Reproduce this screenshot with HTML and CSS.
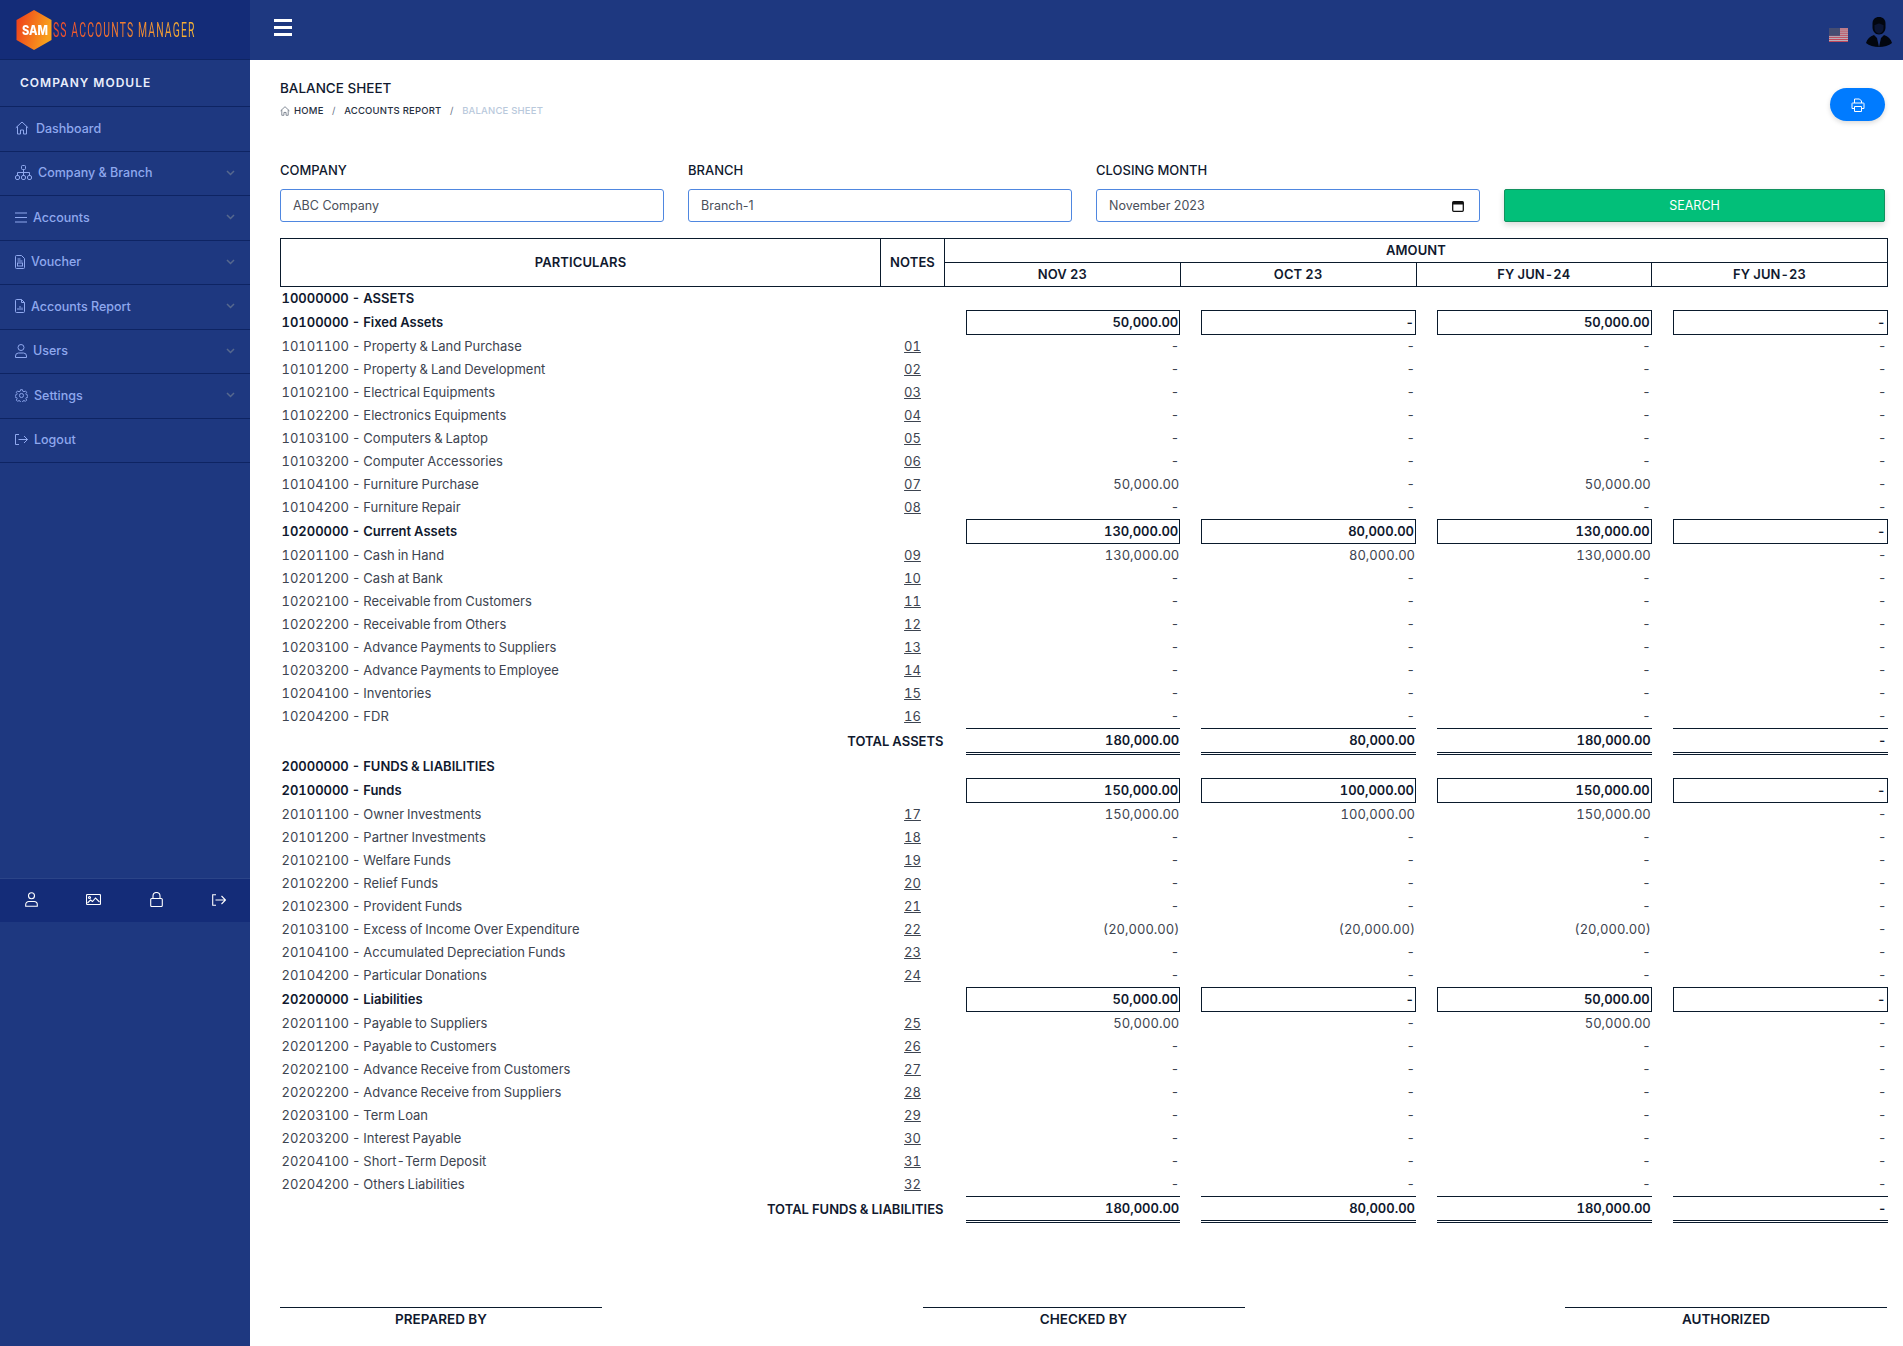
FILE: index.html
```html
<!DOCTYPE html>
<html>
  <head>
    <meta charset="utf-8" />
    <title>Balance Sheet</title>
    <link rel="stylesheet" href="styles.css" />
  </head>

  <body>
    <div class="app">
      <!-- Sidebar -->
      <aside class="sidebar">
        <div class="logo">
          <svg class="logo-hex" width="36" height="40" viewBox="0 0 36 40">
            <defs>
              <linearGradient id="hexfill" x1="0" y1="0" x2="1" y2="0.3">
                <stop offset="0" stop-color="#ee3a1c" />
                <stop offset="1" stop-color="#f8a01c" />
              </linearGradient>
            </defs>
            <path d="M18 0 L35.5 10 V30 L18 40 L0.5 30 V10 Z" fill="url(#hexfill)" />
          </svg>
          <span class="logo-sam">SAM</span>
          <span class="logo-text">SS ACCOUNTS MANAGER</span>
        </div>
        <div class="module-title">COMPANY MODULE</div>

        <nav class="menu">
          <a class="menu-item">
            <svg class="ico" width="14" height="14" viewBox="0 0 14 14"><path d="M0.8 6.8 7 1l6.2 5.8M2.5 5.5V13h3V9h3v4h3V5.5" /></svg>
            <span class="gap-7">Dashboard</span>
          </a>
          <a class="menu-item">
            <svg class="ico" width="17" height="15" viewBox="0 0 17 15"><rect x="6.5" y="0.5" width="4" height="4" rx="1" /><rect x="0.5" y="10.5" width="4" height="4" rx="1.5" /><rect x="6.5" y="10.5" width="4" height="4" rx="1.5" /><rect x="12.5" y="10.5" width="4" height="4" rx="1.5" /><path d="M8.5 4.5v6M2.5 10.5V7.500h12v3" /></svg>
            <span class="gap-6">Company &amp; Branch</span>
            <svg class="chev" width="9" height="6" viewBox="0 0 9 6"><path d="M1 1l3.5 3.5L8 1" /></svg>
          </a>
          <a class="menu-item">
            <svg class="ico" width="12" height="11" viewBox="0 0 12 11"><path d="M0 1h12M0 5.5h12M0 10h12" /></svg>
            <span class="gap-6">Accounts</span>
            <svg class="chev" width="9" height="6" viewBox="0 0 9 6"><path d="M1 1l3.5 3.5L8 1" /></svg>
          </a>
          <a class="menu-item">
            <svg class="ico" width="10" height="14" viewBox="0 0 10 14"><path d="M0.5 1.5a1 1 0 0 1 1-1h5l3 3v9a1 1 0 0 1-1 1h-7a1 1 0 0 1-1-1zM2.5 4h3M2.5 6h5" /><rect x="2.5" y="8" width="5" height="3" /></svg>
            <span class="gap-6">Voucher</span>
            <svg class="chev" width="9" height="6" viewBox="0 0 9 6"><path d="M1 1l3.5 3.5L8 1" /></svg>
          </a>
          <a class="menu-item">
            <svg class="ico" width="10" height="14" viewBox="0 0 10 14"><path d="M0.5 1.5a1 1 0 0 1 1-1h5l3 3v9a1 1 0 0 1-1 1h-7a1 1 0 0 1-1-1zM6.5 0.5v3h3M3 11V9M5 11V7M7 11V8.5" /></svg>
            <span class="gap-6">Accounts Report</span>
            <svg class="chev" width="9" height="6" viewBox="0 0 9 6"><path d="M1 1l3.5 3.5L8 1" /></svg>
          </a>
          <a class="menu-item">
            <svg class="ico" width="12" height="14" viewBox="0 0 12 14"><circle cx="6" cy="3.5" r="3" /><path d="M0.5 13.5v-1.500a3 3 0 0 1 3-3h5a3 3 0 0 1 3 3v1.500z" /></svg>
            <span class="gap-6">Users</span>
            <svg class="chev" width="9" height="6" viewBox="0 0 9 6"><path d="M1 1l3.5 3.5L8 1" /></svg>
          </a>
          <a class="menu-item">
            <svg class="ico" width="13" height="13" viewBox="0 0 14 14"><circle cx="7" cy="7" r="2.2" /><path d="M6 0.7h2l0.4 1.7 1.3 0.6 1.5-0.9 1.4 1.4-0.9 1.5 0.6 1.3 1.7 0.4v2l-1.7 0.4-0.6 1.3 0.9 1.5-1.4 1.4-1.5-0.9-1.3 0.6-0.4 1.7H6l-0.4-1.7-1.3-0.6-1.5 0.9-1.4-1.4 0.9-1.5-0.6-1.3-1.7-0.4v-2l1.7-0.4 0.6-1.3-0.9-1.5 1.4-1.4 1.5 0.9 1.3-0.6z" /></svg>
            <span class="gap-6">Settings</span>
            <svg class="chev" width="9" height="6" viewBox="0 0 9 6"><path d="M1 1l3.5 3.5L8 1" /></svg>
          </a>
          <a class="menu-item">
            <svg class="ico" width="13" height="11" viewBox="0 0 13 11"><path d="M4 0.5H0.5v10H4M3.5 5.500h9M9 2l3.5 3.5L9 9" /></svg>
            <span class="gap-6">Logout</span>
          </a>
        </nav>

        <div class="side-tools">
          <a><svg width="13" height="15" viewBox="0 0 13 15"><circle cx="6.5" cy="3.7" r="3" /><path d="M0.7 14.3v-1.6a3.2 3.2 0 0 1 3.2-3.2h5.2a3.2 3.2 0 0 1 3.2 3.2v1.6z" /></svg></a>
          <a><svg width="15" height="11" viewBox="0 0 15 11"><rect x="0.5" y="0.5" width="14" height="10" rx="1" /><circle cx="3.5" cy="3.5" r="1" /><path d="M1.5 9l3-3 2 1.5 3-3.5 4 4" /></svg></a>
          <a><svg width="13" height="15" viewBox="0 0 13 15"><rect x="0.7" y="6.5" width="11.6" height="8" rx="1" /><path d="M3 6.5V4a3.5 3.5 0 0 1 7 0v2.5" /></svg></a>
          <a><svg width="14" height="12" viewBox="0 0 14 12"><path d="M4 0.7H0.7v10.6H4M3.5 6h10M9.5 2l4 4-4 4" /></svg></a>
        </div>
      </aside>

      <div class="content">
        <!-- Top bar -->
        <header class="topbar">
          <div class="burger"><i></i><i></i><i></i></div>
          <div class="top-right">
            <svg class="flag" width="19" height="14" viewBox="0 0 19 14">
              <rect width="19" height="14" fill="#b8aeb8" />
              <path d="M0 1h19M0 3.100h19M0 5.200h19M0 7.300h19M0 9.400h19M0 11.500h19M0 13.500h19" stroke="#c0485c" stroke-width="1" />
              <rect width="11" height="7.800" fill="#454d72" />
            </svg>
            <svg class="avatar" width="26" height="30" viewBox="0 0 26 30">
              <path d="M13 0c4 0 6.500 2.500 6.500 6.500v4c0 3.500-2.500 7-6.500 7s-6.500-3.500-6.500-7v-4C6.500 2.500 9 0 13 0z" fill="#02060f" />
              <path d="M8 18l3 3 2 9 2-9 3-3c4 1.500 7 4 8 8-3 2.500-8 4-13 4S3 28.500 0 26c1-4 4-6.500 8-8z" fill="#02060f" />
              <path d="M8.500 8c1.500 0 3-1.500 4.500-1.500S16 8 17.500 8v3c0 3-2 5.500-4.500 5.500S8.500 14 8.500 11z" fill="#0b1534" />
            </svg>
          </div>
        </header>

        <main class="page">
          <div class="page-head">
            <div>
              <h1 class="page-title">BALANCE SHEET</h1>
              <div class="crumbs">
                <svg width="10" height="10" viewBox="0 0 14 14"><path d="M0.800 6.800 7 1l6.200 5.800M2.500 5.500V13h3V9h3v4h3V5.500" /></svg>
                <span class="crumb-home">HOME</span>
                <span class="crumb-sep">/</span>
                <span>ACCOUNTS REPORT</span>
                <span class="crumb-sep">/</span>
                <span class="crumb-now">BALANCE SHEET</span>
              </div>
            </div>
            <button class="print-btn">
              <svg width="14" height="14" viewBox="0 0 14 14"><path d="M3.500 5V1h5l2 2v2M3.500 10.500H1V5.500a0.500 0.500 0 0 1 0.500-0.500h11a0.500 0.500 0 0 1 0.500 0.500v5h-2.500M3.500 8.500h7v5h-7z" /></svg>
            </button>
          </div>

          <!-- Filters -->
          <div class="filters">
            <div class="field">
              <label>COMPANY</label>
              <div class="input">ABC Company</div>
            </div>
            <div class="field">
              <label>BRANCH</label>
              <div class="input">Branch-1</div>
            </div>
            <div class="field">
              <label>CLOSING MONTH</label>
              <div class="input input-date">
                November 2023
                <svg width="12" height="12" viewBox="0 0 12 12"><rect x="0.700" y="1.700" width="10.600" height="9.600" rx="1" fill="none" stroke="#111" stroke-width="1.300" /><rect x="0.700" y="1.700" width="10.600" height="2.800" fill="#111" /></svg>
              </div>
            </div>
            <button class="search-btn">SEARCH</button>
          </div>

          <table class="sheet">
            <colgroup>
              <col class="c-part" /><col class="c-note" /><col class="c-amt" /><col class="c-amt" /><col class="c-amt" /><col class="c-amt" />
            </colgroup>
            <thead>
              <tr>
                <th rowspan="2">PARTICULARS</th>
                <th rowspan="2">NOTES</th>
                <th colspan="4">AMOUNT</th>
              </tr>
              <tr><th>NOV 23</th><th>OCT 23</th><th>FY JUN-24</th><th>FY JUN-23</th></tr>
            </thead>
            <tbody>
              <tr class="head-row"><td colspan="6">10000000 - ASSETS</td></tr>
              <tr class="group"><td colspan="2">10100000 - Fixed Assets</td><td><div class="box">50,000.00</div></td><td><div class="box">-</div></td><td><div class="box">50,000.00</div></td><td><div class="box">-</div></td></tr>
              <tr><td>10101100 - Property &amp; Land Purchase</td><td><a>01</a></td><td>-</td><td>-</td><td>-</td><td>-</td></tr>
              <tr><td>10101200 - Property &amp; Land Development</td><td><a>02</a></td><td>-</td><td>-</td><td>-</td><td>-</td></tr>
              <tr><td>10102100 - Electrical Equipments</td><td><a>03</a></td><td>-</td><td>-</td><td>-</td><td>-</td></tr>
              <tr><td>10102200 - Electronics Equipments</td><td><a>04</a></td><td>-</td><td>-</td><td>-</td><td>-</td></tr>
              <tr><td>10103100 - Computers &amp; Laptop</td><td><a>05</a></td><td>-</td><td>-</td><td>-</td><td>-</td></tr>
              <tr><td>10103200 - Computer Accessories</td><td><a>06</a></td><td>-</td><td>-</td><td>-</td><td>-</td></tr>
              <tr><td>10104100 - Furniture Purchase</td><td><a>07</a></td><td>50,000.00</td><td>-</td><td>50,000.00</td><td>-</td></tr>
              <tr><td>10104200 - Furniture Repair</td><td><a>08</a></td><td>-</td><td>-</td><td>-</td><td>-</td></tr>
              <tr class="group"><td colspan="2">10200000 - Current Assets</td><td><div class="box">130,000.00</div></td><td><div class="box">80,000.00</div></td><td><div class="box">130,000.00</div></td><td><div class="box">-</div></td></tr>
              <tr><td>10201100 - Cash in Hand</td><td><a>09</a></td><td>130,000.00</td><td>80,000.00</td><td>130,000.00</td><td>-</td></tr>
              <tr><td>10201200 - Cash at Bank</td><td><a>10</a></td><td>-</td><td>-</td><td>-</td><td>-</td></tr>
              <tr><td>10202100 - Receivable from Customers</td><td><a>11</a></td><td>-</td><td>-</td><td>-</td><td>-</td></tr>
              <tr><td>10202200 - Receivable from Others</td><td><a>12</a></td><td>-</td><td>-</td><td>-</td><td>-</td></tr>
              <tr><td>10203100 - Advance Payments to Suppliers</td><td><a>13</a></td><td>-</td><td>-</td><td>-</td><td>-</td></tr>
              <tr><td>10203200 - Advance Payments to Employee</td><td><a>14</a></td><td>-</td><td>-</td><td>-</td><td>-</td></tr>
              <tr><td>10204100 - Inventories</td><td><a>15</a></td><td>-</td><td>-</td><td>-</td><td>-</td></tr>
              <tr><td>10204200 - FDR</td><td><a>16</a></td><td>-</td><td>-</td><td>-</td><td>-</td></tr>
              <tr class="total"><td colspan="2">TOTAL ASSETS</td><td><div class="sum">180,000.00</div></td><td><div class="sum">80,000.00</div></td><td><div class="sum">180,000.00</div></td><td><div class="sum">-</div></td></tr>
              <tr class="head-row"><td colspan="6">20000000 - FUNDS &amp; LIABILITIES</td></tr>
              <tr class="group"><td colspan="2">20100000 - Funds</td><td><div class="box">150,000.00</div></td><td><div class="box">100,000.00</div></td><td><div class="box">150,000.00</div></td><td><div class="box">-</div></td></tr>
              <tr><td>20101100 - Owner Investments</td><td><a>17</a></td><td>150,000.00</td><td>100,000.00</td><td>150,000.00</td><td>-</td></tr>
              <tr><td>20101200 - Partner Investments</td><td><a>18</a></td><td>-</td><td>-</td><td>-</td><td>-</td></tr>
              <tr><td>20102100 - Welfare Funds</td><td><a>19</a></td><td>-</td><td>-</td><td>-</td><td>-</td></tr>
              <tr><td>20102200 - Relief Funds</td><td><a>20</a></td><td>-</td><td>-</td><td>-</td><td>-</td></tr>
              <tr><td>20102300 - Provident Funds</td><td><a>21</a></td><td>-</td><td>-</td><td>-</td><td>-</td></tr>
              <tr><td>20103100 - Excess of Income Over Expenditure</td><td><a>22</a></td><td>(20,000.00)</td><td>(20,000.00)</td><td>(20,000.00)</td><td>-</td></tr>
              <tr><td>20104100 - Accumulated Depreciation Funds</td><td><a>23</a></td><td>-</td><td>-</td><td>-</td><td>-</td></tr>
              <tr><td>20104200 - Particular Donations</td><td><a>24</a></td><td>-</td><td>-</td><td>-</td><td>-</td></tr>
              <tr class="group"><td colspan="2">20200000 - Liabilities</td><td><div class="box">50,000.00</div></td><td><div class="box">-</div></td><td><div class="box">50,000.00</div></td><td><div class="box">-</div></td></tr>
              <tr><td>20201100 - Payable to Suppliers</td><td><a>25</a></td><td>50,000.00</td><td>-</td><td>50,000.00</td><td>-</td></tr>
              <tr><td>20201200 - Payable to Customers</td><td><a>26</a></td><td>-</td><td>-</td><td>-</td><td>-</td></tr>
              <tr><td>20202100 - Advance Receive from Customers</td><td><a>27</a></td><td>-</td><td>-</td><td>-</td><td>-</td></tr>
              <tr><td>20202200 - Advance Receive from Suppliers</td><td><a>28</a></td><td>-</td><td>-</td><td>-</td><td>-</td></tr>
              <tr><td>20203100 - Term Loan</td><td><a>29</a></td><td>-</td><td>-</td><td>-</td><td>-</td></tr>
              <tr><td>20203200 - Interest Payable</td><td><a>30</a></td><td>-</td><td>-</td><td>-</td><td>-</td></tr>
              <tr><td>20204100 - Short-Term Deposit</td><td><a>31</a></td><td>-</td><td>-</td><td>-</td><td>-</td></tr>
              <tr><td>20204200 - Others Liabilities</td><td><a>32</a></td><td>-</td><td>-</td><td>-</td><td>-</td></tr>
              <tr class="total"><td colspan="2">TOTAL FUNDS &amp; LIABILITIES</td><td><div class="sum">180,000.00</div></td><td><div class="sum">80,000.00</div></td><td><div class="sum">180,000.00</div></td><td><div class="sum">-</div></td></tr>
            </tbody>
          </table>

          <!-- Signatures -->
          <div class="signs">
            <div class="sign">PREPARED BY</div>
            <div class="sign">CHECKED BY</div>
            <div class="sign">AUTHORIZED</div>
          </div>
        </main>
      </div>
    </div>
  </body>
</html>
```

FILE: styles.css
```css
html {
  height: 100%;
}
body {
  margin: 0;
  font-family: "Inter", "Roboto", sans-serif;
  font-size: 13px;
  color: #3d4450;
  background: #ffffff;
}
.app {
  display: flex;
  min-height: 1346px;
}

/* sidebar */
.sidebar {
  width: 250px;
  flex: none;
  background: #1e3880;
  display: flex;
  flex-direction: column;
}
.logo {
  height: 59px;
  background: #142c78;
  border-bottom: 1px solid #0e2463;
  display: flex;
  align-items: center;
  padding-left: 16px;
  position: relative;
  overflow: hidden;
}
.logo-hex {
  flex: none;
}
.logo-sam {
  position: absolute;
  left: 22px;
  top: 22px;
  font-size: 13px;
  line-height: 16px;
  font-weight: 800;
  color: #ffffff;
  transform: scaleX(0.85);
  transform-origin: left;
}
.logo-text {
  margin-left: 1px;
  font-family: "Roboto", sans-serif;
  font-size: 20px;
  font-weight: 400;
  letter-spacing: 2.2px;
  white-space: nowrap;
  transform: scaleX(0.52);
  transform-origin: left;
  background: linear-gradient(90deg, #f04a2c, #f6b634);
  -webkit-background-clip: text;
  background-clip: text;
  color: transparent;
}
.module-title {
  height: 47px;
  line-height: 46px;
  padding-left: 20px;
  font-size: 12px;
  font-weight: 600;
  letter-spacing: 1px;
  color: #e9eefc;
  border-bottom: 1px solid #0e2463;
  box-sizing: border-box;
}
.menu {
  height: 771px;
}
.menu-item {
  display: flex;
  align-items: center;
  height: 44.5px;
  box-sizing: border-box;
  padding: 0 15px 1px;
  border-bottom: 1px solid #0e2463;
  color: #8fa8ee;
  font-size: 12.5px;
  font-weight: 500;
}
.ico {
  flex: none;
  fill: none;
  stroke: #8fa8ee;
  stroke-width: 1;
}
.gap-7 {
  margin-left: 7px;
}
.gap-6 {
  margin-left: 6px;
}
.chev {
  margin-left: auto;
  margin-right: 0;
  fill: none;
  stroke: #56688e;
  stroke-width: 1.5;
}
.side-tools {
  display: flex;
  height: 44px;
  padding-bottom: 2px;
  background: #142c78;
  border-top: 1px solid #2b4488;
  box-sizing: border-box;
}
.side-tools a {
  flex: 1;
  display: flex;
  align-items: center;
  justify-content: center;
}
.side-tools svg {
  fill: none;
  stroke: #ffffff;
  stroke-width: 1.1;
}

/* top bar */
.content {
  flex: 1;
  min-width: 0;
}
.topbar {
  height: 60px;
  background: #1e3880;
  display: flex;
  align-items: center;
  justify-content: space-between;
  padding: 0 11px 0 24px;
  box-sizing: border-box;
}
.burger {
  width: 18px;
  margin-top: -2px;
}
.burger i {
  display: block;
  height: 3px;
  background: #ffffff;
  margin-bottom: 4px;
}
.top-right {
  display: flex;
  align-items: center;
  gap: 18px;
}
.flag {
  margin-top: 9px;
}
.avatar {
  margin-top: 4px;
}

/* page */
.page {
  padding: 20px 16px 0 30px;
}
.page-head {
  display: flex;
  justify-content: space-between;
  align-items: flex-start;
  padding-right: 2px;
  height: 82px;
}
.page-title {
  margin: 0;
  font-size: 13.5px;
  line-height: 16px;
  font-weight: 500;
  color: #10192e;
}
.crumbs {
  display: flex;
  align-items: center;
  margin-top: 8px;
  font-size: 9.5px;
  line-height: 14px;
  font-weight: 500;
  color: #27303f;
  letter-spacing: 0.2px;
}
.crumbs svg {
  fill: none;
  stroke: #556070;
  stroke-width: 1;
}
.crumb-home {
  margin-left: 4px;
}
.crumb-sep {
  margin: 0 8.5px;
  color: #667085;
  font-weight: 400;
}
.crumb-now {
  color: #b9c9dc;
}
.print-btn {
  width: 55px;
  height: 33px;
  margin-top: 8px;
  border: 0;
  border-radius: 17px;
  background: #007bff;
  box-shadow: 0 2px 5px rgba(0, 0, 0, 0.15);
  display: flex;
  align-items: center;
  justify-content: center;
  padding: 0;
}
.print-btn svg {
  fill: none;
  stroke: #ffffff;
  stroke-width: 1;
}

.filters {
  display: grid;
  grid-template-columns: 384px 384px 384px 1fr;
  column-gap: 24px;
  align-items: end;
  padding-right: 2px;
}
.field label {
  display: block;
  font-size: 13px;
  line-height: 16px;
  font-weight: 500;
  color: #10192e;
  margin-bottom: 11px;
}
.input {
  height: 33px;
  box-sizing: border-box;
  border: 1px solid #4f87e0;
  border-radius: 3px;
  padding: 0 12px;
  line-height: 31px;
  font-size: 12.5px;
  color: #4a4f5a;
}
.input-date {
  display: flex;
  align-items: center;
  justify-content: space-between;
  padding-right: 15px;
}
.search-btn {
  height: 33px;
  border: 1px solid #12925f;
  border-radius: 2px;
  background: #02bf79;
  color: #ffffff;
  font-family: inherit;
  font-size: 12.5px;
  padding: 0;
  box-shadow: 0 3px 6px rgba(0, 0, 0, 0.15);
}

/* table */
.sheet {
  width: 1607px;
  margin-top: 16px;
  border-collapse: collapse;
  table-layout: fixed;
  font-variant-numeric: tabular-nums;
  word-spacing: -0.5px;
}
.c-part {
  width: 600px;
}
.c-note {
  width: 64px;
}
.c-amt {
  width: 235.75px;
}
.sheet th {
  height: 22px;
  padding: 0 0 1px;
  border: 1px solid #0a1a2c;
  font-size: 13px;
  font-weight: 600;
  letter-spacing: 0.1px;
  color: #10192e;
}
.sheet td {
  height: 23px;
  padding: 0 1px;
  box-sizing: border-box;
  line-height: 16px;
  text-align: right;
  white-space: nowrap;
}
.sheet td:first-child {
  text-align: left;
  padding-left: 1px;
}
.sheet tr:not(.group):not(.total) td:nth-child(2) {
  text-align: center;
}
.sheet a {
  text-decoration: underline;
  color: #3d4450;
}
.head-row td {
  height: 23px;
  font-weight: 600;
  color: #10192e;
}
.group td {
  height: 25px;
  padding-right: 0;
}
.group td:first-child {
  font-weight: 600;
  color: #10192e;
}
.box {
  height: 25px;
  margin-left: 20px;
  box-sizing: border-box;
  border: 1px solid #0a1a2c;
  padding-right: 1px;
  line-height: 23px;
  font-weight: 600;
  color: #10192e;
}
.total td {
  height: 27px;
  padding-right: 0;
  font-weight: 600;
  color: #10192e;
}
.sheet .total td:first-child {
  text-align: right;
  padding-right: 1px;
  padding-bottom: 1px;
  font-weight: 600;
}
.sum {
  height: 27px;
  margin-left: 20px;
  box-sizing: border-box;
  border-top: 1px solid #0a1a2c;
  border-bottom: 3px double #0a1a2c;
  padding-right: 1px;
  line-height: 22px;
}

.signs {
  display: flex;
  justify-content: space-between;
  margin-top: 84px;
}
.sign {
  width: 322px;
  border-top: 1px solid #0a1a2c;
  padding-top: 3px;
  line-height: 17px;
  text-align: center;
  font-size: 13.5px;
  font-weight: 600;
  color: #10192e;
}
```
